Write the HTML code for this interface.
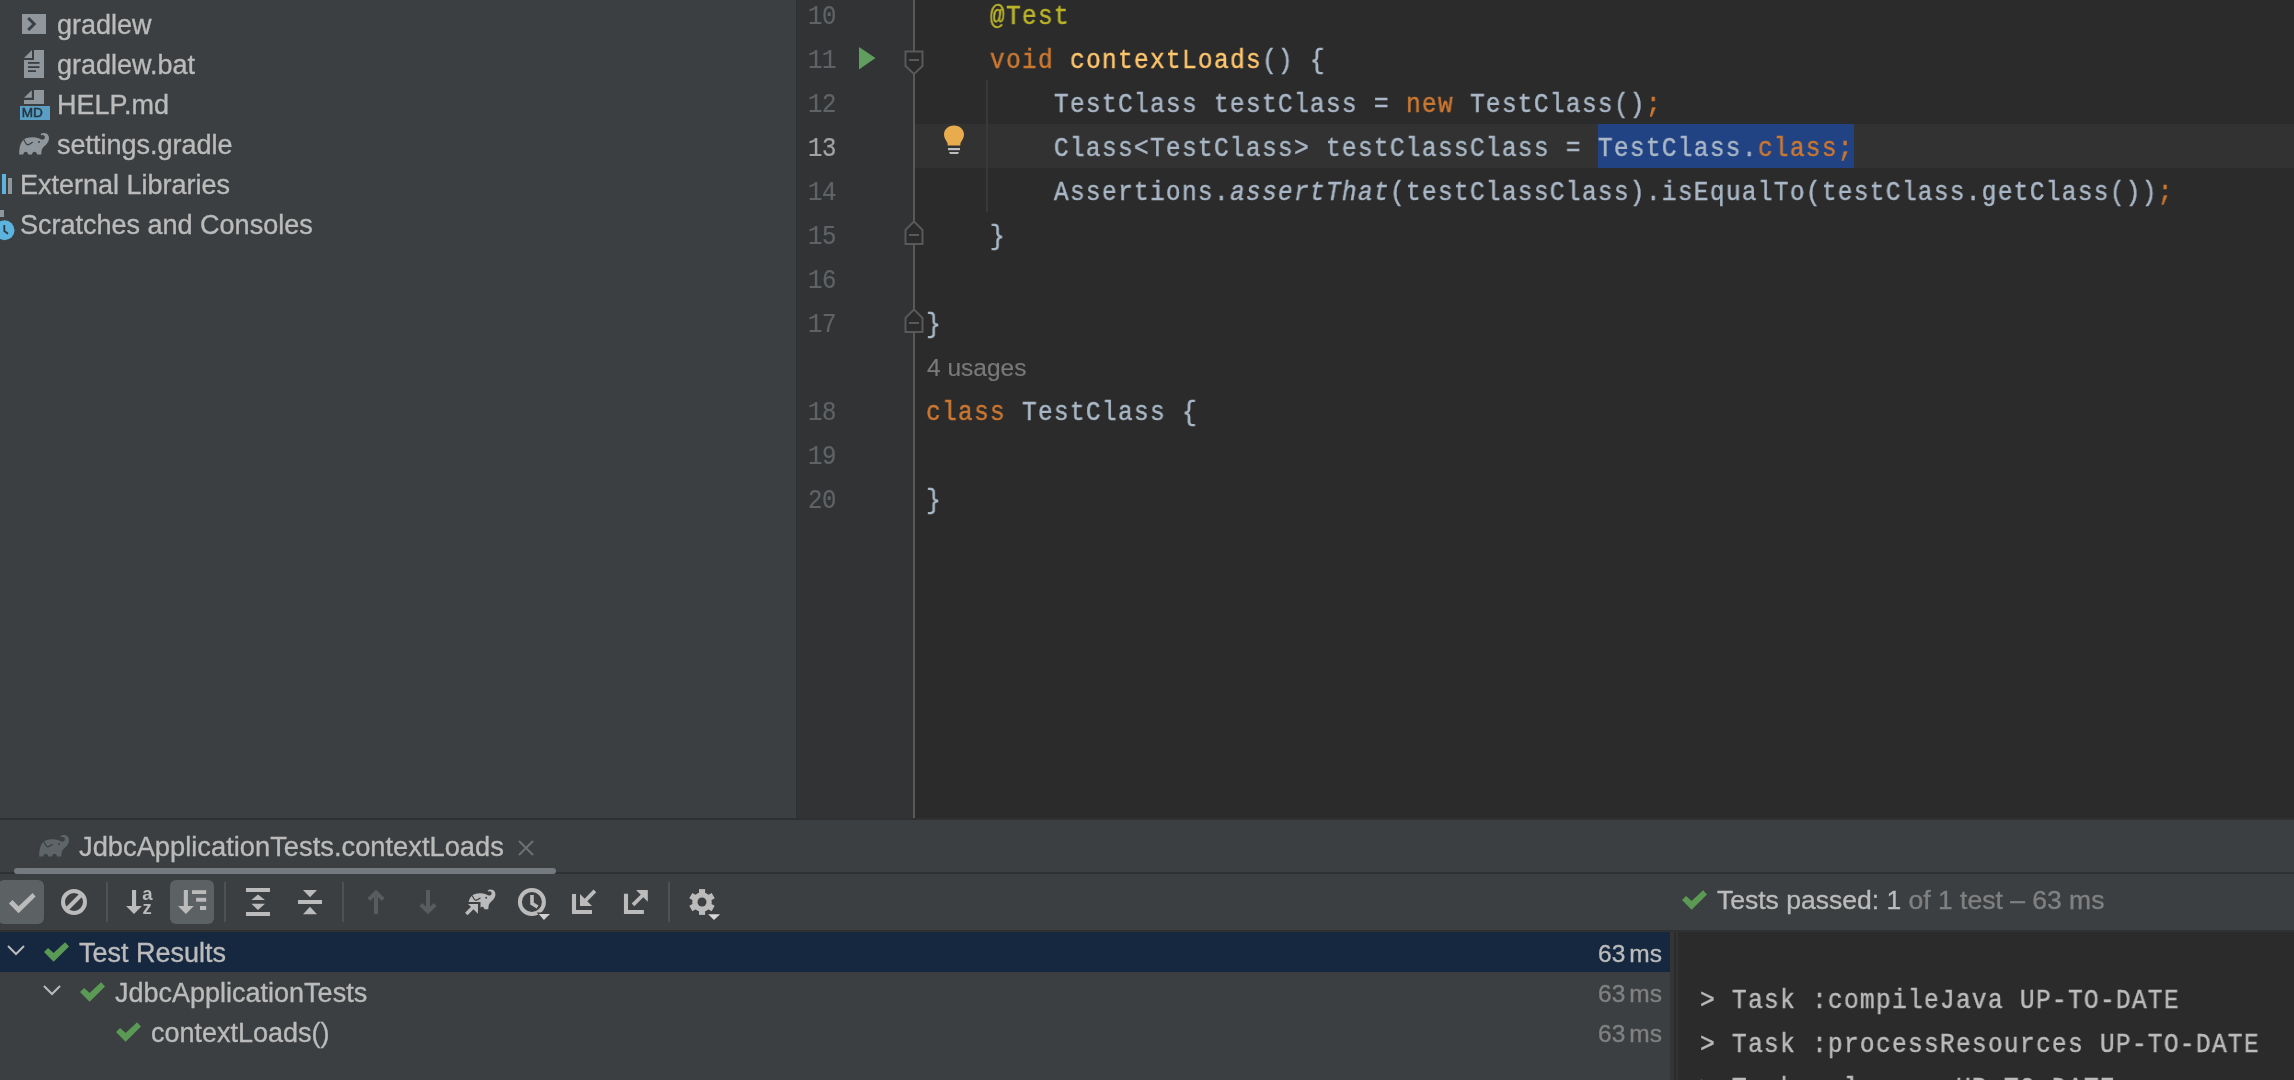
<!DOCTYPE html>
<html><head><meta charset="utf-8"><style>
html,body{margin:0;padding:0;}
body{width:2294px;height:1080px;overflow:hidden;position:relative;background:#3c3f41;font-family:"Liberation Sans",sans-serif;}
.r{position:absolute;}
.t{position:absolute;white-space:pre;will-change:transform;}
.s{position:absolute;overflow:visible;will-change:transform;}
</style></head><body>
<div class="r" style="left:0px;top:0px;width:796px;height:818px;background:#3c3f41;"></div>
<div class="t" style="left:57px;top:5.64px;font-family:'Liberation Sans', sans-serif;font-size:27px;line-height:38px;color:#bbbbbb;;-webkit-text-stroke:0.35px">gradlew</div>
<div class="t" style="left:57px;top:45.64px;font-family:'Liberation Sans', sans-serif;font-size:27px;line-height:38px;color:#bbbbbb;;-webkit-text-stroke:0.35px">gradlew.bat</div>
<div class="t" style="left:57px;top:85.64px;font-family:'Liberation Sans', sans-serif;font-size:27px;line-height:38px;color:#bbbbbb;;-webkit-text-stroke:0.35px">HELP.md</div>
<div class="t" style="left:57px;top:125.64px;font-family:'Liberation Sans', sans-serif;font-size:27px;line-height:38px;color:#bbbbbb;;-webkit-text-stroke:0.35px">settings.gradle</div>
<div class="t" style="left:20px;top:165.64px;font-family:'Liberation Sans', sans-serif;font-size:27px;line-height:38px;color:#bbbbbb;;-webkit-text-stroke:0.35px">External Libraries</div>
<div class="t" style="left:20px;top:205.64px;font-family:'Liberation Sans', sans-serif;font-size:27px;line-height:38px;color:#bbbbbb;;-webkit-text-stroke:0.35px">Scratches and Consoles</div>
<svg class="s" style="left:22px;top:14px" width="24" height="20" viewBox="0 0 24 20"><rect x="0" y="0" width="24" height="20" fill="#8f979d"/><path d="M6.2 4 L12.2 10 L6.2 16" stroke="#3c3f41" stroke-width="3" fill="none"/></svg>
<svg class="s" style="left:24px;top:50px" width="20" height="28" viewBox="0 0 20 28"><path d="M0 8 L8 0 L8 8 Z" fill="#8f979d"/><path d="M10 0 L20 0 L20 28 L0 28 L0 10 L10 10 Z" fill="#8f979d"/><rect x="4" y="12" width="11.5" height="1.8" fill="#3c3f41"/><rect x="4" y="16.2" width="11.5" height="1.8" fill="#3c3f41"/><rect x="4" y="20.2" width="8" height="1.8" fill="#3c3f41"/></svg>
<svg class="s" style="left:20px;top:90px" width="31" height="31" viewBox="0 0 31 31"><path d="M4 7.7 L11.8 0.3 L11.8 7.7 Z" fill="#8f979d"/><path d="M14 0 L24 0 L24 14 L4 14 L4 10 L14 10 Z" fill="#8f979d"/><rect x="0" y="16" width="30" height="14" fill="#5a9ec4"/><text x="1.8" y="27.4" font-family="Liberation Sans" font-size="13.6" stroke="#233744" stroke-width="0.5" fill="#233744">MD</text></svg>
<svg class="s" style="left:16px;top:130px" width="36" height="28" viewBox="0 0 36 28"><path d="M3.2,24.6 C3,16 5.5,10 10,8.3 C14,6.8 19,6.8 22.5,8.2 C24.5,9 25.8,9.8 27,9.6 C28.8,9.2 29.3,7.3 28.6,6 C27.9,4.8 26.2,4.7 25.2,5.4 L24.6,4.4 C25.8,2.9 28.5,2.5 30.5,3.6 C32.6,4.8 33.3,7.5 32.9,9.6 C32.4,12.5 30.5,14.5 28,16.5 C26.5,17.8 25.8,19.5 25.6,21 L25.2,24.6 L21,24.6 C20.9,22.8 19.8,21.8 18.5,21.8 C17.2,21.8 16.2,22.8 16,24.6 L12.2,24.6 C12,22.8 11,21.8 9.75,21.8 C8.5,21.8 7.5,22.8 7.3,24.6 Z" fill="#8f979d"/><path d="M7.8,9.6 C9,12 10,14.5 11.5,14.8 C13,15 15,13.5 16.8,12.2" stroke="#3c3f41" stroke-width="1.2" fill="none"/><circle cx="23" cy="12" r="1" fill="#3c3f41"/></svg>
<div class="r" style="left:2px;top:174px;width:4px;height:20px;background:#5cb3dd;"></div>
<div class="r" style="left:8px;top:178px;width:4px;height:16px;background:#8f979d;"></div>
<div class="r" style="left:0px;top:210px;width:4px;height:7px;background:#8f979d;"></div>
<svg class="s" style="left:-6.5px;top:220px" width="21" height="21" viewBox="0 0 21 21"><circle cx="10.5" cy="10.2" r="10" fill="#5cb3dd"/><path d="M10.3 5 L10.3 11 L14 13.8" stroke="#2b3a45" stroke-width="1.8" fill="none"/></svg>
<div class="r" style="left:796px;top:0px;width:117px;height:818px;background:#313335;"></div>
<div class="r" style="left:796px;top:0px;width:1px;height:818px;background:#2f3032;"></div>
<div class="r" style="left:915px;top:0px;width:1379px;height:818px;background:#2b2b2b;"></div>
<div class="r" style="left:915px;top:124px;width:1379px;height:44px;background:#323232;"></div>
<div class="r" style="left:913px;top:0px;width:2px;height:818px;background:#595959;"></div>
<div class="t" style="right:1457.6px;top:0.61px;font-family:'Liberation Mono', monospace;font-size:24px;line-height:34px;color:#606366;letter-spacing:-0.4px;-webkit-text-stroke:0.2px;transform:scale(1,1.13);transform-origin:100% 23.39px">10</div>
<div class="t" style="right:1457.6px;top:44.61px;font-family:'Liberation Mono', monospace;font-size:24px;line-height:34px;color:#606366;letter-spacing:-0.4px;-webkit-text-stroke:0.2px;transform:scale(1,1.13);transform-origin:100% 23.39px">11</div>
<div class="t" style="right:1457.6px;top:88.61px;font-family:'Liberation Mono', monospace;font-size:24px;line-height:34px;color:#606366;letter-spacing:-0.4px;-webkit-text-stroke:0.2px;transform:scale(1,1.13);transform-origin:100% 23.39px">12</div>
<div class="t" style="right:1457.6px;top:132.61px;font-family:'Liberation Mono', monospace;font-size:24px;line-height:34px;color:#a4a3a3;letter-spacing:-0.4px;-webkit-text-stroke:0.2px;transform:scale(1,1.13);transform-origin:100% 23.39px">13</div>
<div class="t" style="right:1457.6px;top:176.61px;font-family:'Liberation Mono', monospace;font-size:24px;line-height:34px;color:#606366;letter-spacing:-0.4px;-webkit-text-stroke:0.2px;transform:scale(1,1.13);transform-origin:100% 23.39px">14</div>
<div class="t" style="right:1457.6px;top:220.61px;font-family:'Liberation Mono', monospace;font-size:24px;line-height:34px;color:#606366;letter-spacing:-0.4px;-webkit-text-stroke:0.2px;transform:scale(1,1.13);transform-origin:100% 23.39px">15</div>
<div class="t" style="right:1457.6px;top:264.61px;font-family:'Liberation Mono', monospace;font-size:24px;line-height:34px;color:#606366;letter-spacing:-0.4px;-webkit-text-stroke:0.2px;transform:scale(1,1.13);transform-origin:100% 23.39px">16</div>
<div class="t" style="right:1457.6px;top:308.61px;font-family:'Liberation Mono', monospace;font-size:24px;line-height:34px;color:#606366;letter-spacing:-0.4px;-webkit-text-stroke:0.2px;transform:scale(1,1.13);transform-origin:100% 23.39px">17</div>
<div class="t" style="right:1457.6px;top:396.61px;font-family:'Liberation Mono', monospace;font-size:24px;line-height:34px;color:#606366;letter-spacing:-0.4px;-webkit-text-stroke:0.2px;transform:scale(1,1.13);transform-origin:100% 23.39px">18</div>
<div class="t" style="right:1457.6px;top:440.61px;font-family:'Liberation Mono', monospace;font-size:24px;line-height:34px;color:#606366;letter-spacing:-0.4px;-webkit-text-stroke:0.2px;transform:scale(1,1.13);transform-origin:100% 23.39px">19</div>
<div class="t" style="right:1457.6px;top:484.61px;font-family:'Liberation Mono', monospace;font-size:24px;line-height:34px;color:#606366;letter-spacing:-0.4px;-webkit-text-stroke:0.2px;transform:scale(1,1.13);transform-origin:100% 23.39px">20</div>
<svg class="s" style="left:859px;top:47px" width="17" height="23" viewBox="0 0 17 23"><path d="M0 0 L16.5 11 L0 22.5 Z" fill="#5f9e5f"/></svg>
<svg class="s" style="left:904px;top:50px" width="20" height="26" viewBox="0 0 20 26"><path d="M1.5 1.5 L18.5 1.5 L18.5 16 L10 24 L1.5 16 Z" fill="#2b2b2b" stroke="#595959" stroke-width="2"/><rect x="5" y="9" width="10" height="2" fill="#595959"/></svg>
<svg class="s" style="left:904px;top:220px" width="20" height="26" viewBox="0 0 20 26"><path d="M1.5 24 L18.5 24 L18.5 10 L10 1.5 L1.5 10 Z" fill="#2b2b2b" stroke="#595959" stroke-width="2"/><rect x="5" y="14" width="10" height="2" fill="#595959"/></svg>
<svg class="s" style="left:904px;top:308px" width="20" height="26" viewBox="0 0 20 26"><path d="M1.5 24 L18.5 24 L18.5 10 L10 1.5 L1.5 10 Z" fill="#2b2b2b" stroke="#595959" stroke-width="2"/><rect x="5" y="14" width="10" height="2" fill="#595959"/></svg>
<svg class="s" style="left:943px;top:125px" width="23" height="31" viewBox="0 0 23 31"><path d="M11 0.5 C17 0.5 21 4.5 21 9.5 C21 13 19 15 17.5 18 L17.3 20.5 L4.7 20.5 L4.5 18 C3 15 1 13 1 9.5 C1 4.5 5 0.5 11 0.5 Z" fill="#e8ac4e"/><rect x="5" y="23" width="12" height="2.2" fill="#bdbdbd"/><path d="M6 27 L16 27 L15 29 L7 29 Z" fill="#bdbdbd"/></svg>
<div class="r" style="left:986px;top:80px;width:2px;height:132px;background:#393939;"></div>
<div class="r" style="left:1598px;top:124px;width:256px;height:44px;background:#214283;"></div>
<div class="t" style="left:926px;top:-0.90px;font-family:'Liberation Mono', monospace;font-size:26.6667px;line-height:37px;color:#a9b7c6;white-space:pre;letter-spacing:1.391px;-webkit-text-stroke:0.45px;transform:scale(0.92,1.04);transform-origin:0 25.60px"><span style="color:#bbb529">    @Test</span></div>
<div class="t" style="left:926px;top:43.10px;font-family:'Liberation Mono', monospace;font-size:26.6667px;line-height:37px;color:#a9b7c6;white-space:pre;letter-spacing:1.391px;-webkit-text-stroke:0.45px;transform:scale(0.92,1.04);transform-origin:0 25.60px"><span style="color:#a9b7c6">    </span><span style="color:#cc7832">void</span><span style="color:#a9b7c6"> </span><span style="color:#ffc66d">contextLoads</span><span style="color:#a9b7c6">() {</span></div>
<div class="t" style="left:926px;top:87.10px;font-family:'Liberation Mono', monospace;font-size:26.6667px;line-height:37px;color:#a9b7c6;white-space:pre;letter-spacing:1.391px;-webkit-text-stroke:0.45px;transform:scale(0.92,1.04);transform-origin:0 25.60px"><span style="color:#a9b7c6">        TestClass testClass = </span><span style="color:#cc7832">new</span><span style="color:#a9b7c6"> TestClass()</span><span style="color:#cc7832">;</span></div>
<div class="t" style="left:926px;top:131.10px;font-family:'Liberation Mono', monospace;font-size:26.6667px;line-height:37px;color:#a9b7c6;white-space:pre;letter-spacing:1.391px;-webkit-text-stroke:0.45px;transform:scale(0.92,1.04);transform-origin:0 25.60px"><span style="color:#a9b7c6">        Class&lt;TestClass&gt; testClassClass = TestClass.</span><span style="color:#cc7832">class;</span></div>
<div class="t" style="left:926px;top:175.10px;font-family:'Liberation Mono', monospace;font-size:26.6667px;line-height:37px;color:#a9b7c6;white-space:pre;letter-spacing:1.391px;-webkit-text-stroke:0.45px;transform:scale(0.92,1.04);transform-origin:0 25.60px"><span style="color:#a9b7c6">        Assertions.</span><span style="color:#a9b7c6;font-style:italic">assertThat</span><span style="color:#a9b7c6">(testClassClass).isEqualTo(testClass.getClass())</span><span style="color:#cc7832">;</span></div>
<div class="t" style="left:926px;top:219.10px;font-family:'Liberation Mono', monospace;font-size:26.6667px;line-height:37px;color:#a9b7c6;white-space:pre;letter-spacing:1.391px;-webkit-text-stroke:0.45px;transform:scale(0.92,1.04);transform-origin:0 25.60px"><span style="color:#a9b7c6">    }</span></div>
<div class="t" style="left:926px;top:307.10px;font-family:'Liberation Mono', monospace;font-size:26.6667px;line-height:37px;color:#a9b7c6;white-space:pre;letter-spacing:1.391px;-webkit-text-stroke:0.45px;transform:scale(0.92,1.04);transform-origin:0 25.60px"><span style="color:#a9b7c6">}</span></div>
<div class="t" style="left:926px;top:395.10px;font-family:'Liberation Mono', monospace;font-size:26.6667px;line-height:37px;color:#a9b7c6;white-space:pre;letter-spacing:1.391px;-webkit-text-stroke:0.45px;transform:scale(0.92,1.04);transform-origin:0 25.60px"><span style="color:#cc7832">class</span><span style="color:#a9b7c6"> TestClass {</span></div>
<div class="t" style="left:926px;top:483.10px;font-family:'Liberation Mono', monospace;font-size:26.6667px;line-height:37px;color:#a9b7c6;white-space:pre;letter-spacing:1.391px;-webkit-text-stroke:0.45px;transform:scale(0.92,1.04);transform-origin:0 25.60px"><span style="color:#a9b7c6">}</span></div>
<div class="t" style="left:927px;top:350.51px;font-family:'Liberation Sans', sans-serif;font-size:24.5px;line-height:34px;color:#7a7a7a;-webkit-text-stroke:0.15px">4 usages</div>
<div class="r" style="left:0px;top:818px;width:2294px;height:2px;background:#2f3032;"></div>
<div class="r" style="left:0px;top:820px;width:2294px;height:52px;background:#3c3f41;"></div>
<div class="r" style="left:0px;top:872px;width:2294px;height:2px;background:#2f3032;"></div>
<div class="r" style="left:14px;top:868px;width:542px;height:6px;background:#747a80;border-radius:3px"></div>
<svg class="s" style="left:35.7px;top:831.5px" width="36" height="28" viewBox="0 0 36 28"><path d="M3.2,24.6 C3,16 5.5,10 10,8.3 C14,6.8 19,6.8 22.5,8.2 C24.5,9 25.8,9.8 27,9.6 C28.8,9.2 29.3,7.3 28.6,6 C27.9,4.8 26.2,4.7 25.2,5.4 L24.6,4.4 C25.8,2.9 28.5,2.5 30.5,3.6 C32.6,4.8 33.3,7.5 32.9,9.6 C32.4,12.5 30.5,14.5 28,16.5 C26.5,17.8 25.8,19.5 25.6,21 L25.2,24.6 L21,24.6 C20.9,22.8 19.8,21.8 18.5,21.8 C17.2,21.8 16.2,22.8 16,24.6 L12.2,24.6 C12,22.8 11,21.8 9.75,21.8 C8.5,21.8 7.5,22.8 7.3,24.6 Z" fill="#5e6569"/><path d="M7.8,9.6 C9,12 10,14.5 11.5,14.8 C13,15 15,13.5 16.8,12.2" stroke="#3c3f41" stroke-width="1.2" fill="none"/><circle cx="23" cy="12" r="1" fill="#3c3f41"/></svg>
<div class="t" style="left:79px;top:827.54px;font-family:'Liberation Sans', sans-serif;font-size:27.3px;line-height:38px;color:#bbbbbb;;-webkit-text-stroke:0.35px">JdbcApplicationTests.contextLoads</div>
<svg class="s" style="left:518px;top:840px" width="16" height="16" viewBox="0 0 16 16"><path d="M1 1 L15 15 M15 1 L1 15" stroke="#6e7275" stroke-width="1.8"/></svg>
<div class="r" style="left:0px;top:874px;width:2294px;height:56px;background:#3c3f41;"></div>
<div class="r" style="left:0px;top:930px;width:2294px;height:2px;background:#2f3032;"></div>
<div class="r" style="left:-2px;top:880px;width:46px;height:44px;background:#5c6164;border-radius:6px"></div>
<div class="r" style="left:170px;top:880px;width:44px;height:44px;background:#5c6164;border-radius:6px"></div>
<svg class="s" style="left:0px;top:880px" width="44" height="44" viewBox="0 0 44 44"><polygon points="12.5,20 8.9,23.5 18.6,33.2 35.6,16.4 32.6,12.9 18.6,26.2" fill="#bbbbbb"/></svg>
<svg class="s" style="left:58px;top:886px" width="32" height="32" viewBox="0 0 32 32"><circle cx="16" cy="16" r="11" stroke="#bbbbbb" stroke-width="4" fill="none"/><path d="M8.5 23.5 L23.5 8.5" stroke="#bbbbbb" stroke-width="4"/></svg>
<div class="r" style="left:106px;top:882px;width:2px;height:40px;background:#4f5254;"></div>
<div class="r" style="left:224px;top:882px;width:2px;height:40px;background:#4f5254;"></div>
<div class="r" style="left:342px;top:882px;width:2px;height:40px;background:#4f5254;"></div>
<div class="r" style="left:668px;top:882px;width:2px;height:40px;background:#4f5254;"></div>
<svg class="s" style="left:120px;top:882px" width="40" height="40" viewBox="0 0 40 40"><rect x="12" y="8" width="4.1" height="17" fill="#bbbbbb"/><path d="M6.1 24.1 L21.9 24.1 L14 32 Z" fill="#bbbbbb"/><text x="22.3" y="18.1" font-family="Liberation Sans" font-weight="bold" font-size="18.5" fill="#bbbbbb">a</text><text x="22.6" y="32" font-family="Liberation Sans" font-weight="bold" font-size="18.5" fill="#bbbbbb">z</text></svg>
<svg class="s" style="left:170px;top:880px" width="44" height="44" viewBox="0 0 44 44"><rect x="13.8" y="10" width="4.1" height="17" fill="#bbbbbb"/><path d="M8 26 L23.8 26 L15.9 34 Z" fill="#bbbbbb"/><rect x="22" y="10.2" width="14.2" height="3.8" fill="#bbbbbb"/><rect x="26.1" y="17.8" width="10.1" height="3.9" fill="#bbbbbb"/><rect x="30" y="26" width="6.2" height="4" fill="#bbbbbb"/></svg>
<svg class="s" style="left:246px;top:888px" width="24" height="28" viewBox="0 0 24 28"><rect x="0" y="0" width="24" height="4" fill="#bbbbbb"/><rect x="0" y="24" width="24" height="4" fill="#bbbbbb"/><path d="M5.4 12 L12 6.4 L19 12 Z M5.4 15.8 L12 22 L19 15.8 Z" fill="#bbbbbb"/></svg>
<svg class="s" style="left:298px;top:888px" width="24" height="28" viewBox="0 0 24 28"><rect x="0" y="12" width="24" height="4" fill="#bbbbbb"/><path d="M5 2 L19 2 L12 9.2 Z M5 26.2 L19 26.2 L12 18.8 Z" fill="#bbbbbb"/></svg>
<svg class="s" style="left:360px;top:882px" width="40" height="40" viewBox="0 0 40 40"><rect x="14" y="12" width="4" height="20" fill="#5a5b5c"/><path d="M8.8 17.5 L16 10.6 L23.2 17.5" stroke="#5a5b5c" stroke-width="4" fill="none" stroke-linecap="butt" stroke-linejoin="miter"/></svg>
<svg class="s" style="left:412px;top:882px" width="40" height="40" viewBox="0 0 40 40"><rect x="14" y="8" width="4" height="20" fill="#5a5b5c"/><path d="M8.8 22.5 L16 29.4 L23.2 22.5" stroke="#5a5b5c" stroke-width="4" fill="none" stroke-linecap="butt" stroke-linejoin="miter"/></svg>
<svg class="s" style="left:459px;top:884px" width="40" height="36" viewBox="0 0 40 36"><g transform="translate(6.06,2.7) scale(0.92)"><path d="M3.2,24.6 C3,16 5.5,10 10,8.3 C14,6.8 19,6.8 22.5,8.2 C24.5,9 25.8,9.8 27,9.6 C28.8,9.2 29.3,7.3 28.6,6 C27.9,4.8 26.2,4.7 25.2,5.4 L24.6,4.4 C25.8,2.9 28.5,2.5 30.5,3.6 C32.6,4.8 33.3,7.5 32.9,9.6 C32.4,12.5 30.5,14.5 28,16.5 C26.5,17.8 25.8,19.5 25.6,21 L25.2,24.6 L21,24.6 C20.9,22.8 19.8,21.8 18.5,21.8 C17.2,21.8 16.2,22.8 16,24.6 L12.2,24.6 C12,22.8 11,21.8 9.75,21.8 C8.5,21.8 7.5,22.8 7.3,24.6 Z" fill="#bbbbbb"/><path d="M7.8,9.6 C9,12 10,14.5 11.5,14.8 C13,15 15,13.5 16.8,12.2" stroke="#3c3f41" stroke-width="1.2" fill="none"/><circle cx="23" cy="12" r="1" fill="#3c3f41"/></g><rect x="0" y="18" width="21.5" height="18" fill="#3c3f41"/><path d="M7.3 30 L15 22.3" stroke="#bbbbbb" stroke-width="3.4"/><path d="M9 20 L19 20 L19 29.7 Z" fill="#bbbbbb"/></svg>
<svg class="s" style="left:512px;top:884px" width="44" height="40" viewBox="0 0 44 40"><circle cx="19.9" cy="18" r="12" stroke="#bbbbbb" stroke-width="4" fill="none"/><path d="M20 11.1 L20 19.6 L25.6 23" stroke="#bbbbbb" stroke-width="3.6" fill="none"/><path d="M24.7 28.5 L40 28.5 L31.9 37.5 Z" fill="#3c3f41"/><path d="M26.7 30 L38 30 L31.9 35.9 Z" fill="#d0d0d0"/></svg>
<svg class="s" style="left:560px;top:882px" width="40" height="40" viewBox="0 0 40 40"><path d="M14 12 L14 30 L32 30" stroke="#bbbbbb" stroke-width="4.1" fill="none" stroke-linejoin="miter"/><path d="M20 12 L20 24 L32 24 Z" fill="#bbbbbb"/><path d="M24 20 L34.9 8.9" stroke="#bbbbbb" stroke-width="3.8"/></svg>
<svg class="s" style="left:612px;top:882px" width="40" height="40" viewBox="0 0 40 40"><path d="M14 11.8 L14 30 L31.9 30" stroke="#bbbbbb" stroke-width="4.1" fill="none" stroke-linejoin="miter"/><path d="M24.1 8.1 L35.8 8.1 L35.8 19.8 Z" fill="#bbbbbb"/><path d="M21 22.9 L31 13" stroke="#bbbbbb" stroke-width="3.8"/></svg>
<svg class="s" style="left:682px;top:882px" width="44" height="44" viewBox="0 0 44 44"><circle cx="20" cy="20" r="9.8" fill="#bbbbbb"/><g fill="#bbbbbb"><rect x="17" y="7.1" width="6.1" height="25.8"/><rect x="17" y="7.1" width="6.1" height="25.8" transform="rotate(60 20 20)"/><rect x="17" y="7.1" width="6.1" height="25.8" transform="rotate(120 20 20)"/></g><circle cx="20" cy="20" r="4.5" fill="#3c3f41"/><path d="M24.1 30.7 L40.2 30.7 L32 39.5 Z" fill="#3c3f41"/><path d="M26.1 32.2 L38.1 32.2 L32 37.9 Z" fill="#d8d8d8"/></svg>
<svg class="s" style="left:1682px;top:890px" width="26" height="21" viewBox="0 0 26 21"><polygon points="4.06,5.94 0.03,10.1 9.6,19.8 25,4.4 21.1,0.25 9.6,10.9" fill="#5b9a55"/></svg>
<div class="t" style="left:1717px;top:882.31px;font-family:'Liberation Sans', sans-serif;font-size:26.5px;line-height:37px;color:#bbbbbb;;-webkit-text-stroke:0.35px">Tests passed: 1 <span style="color:#808080">of 1 test – 63 ms</span></div>
<div class="r" style="left:0px;top:932px;width:1670px;height:148px;background:#3c3f41;"></div>
<div class="r" style="left:0px;top:932px;width:1670px;height:40px;background:#162840;"></div>
<svg class="s" style="left:6px;top:944px" width="20" height="14" viewBox="0 0 20 14"><path d="M2 2 L10 10 L18 2" stroke="#bbbbbb" stroke-width="2" fill="none"/></svg>
<svg class="s" style="left:44px;top:942px" width="26" height="21" viewBox="0 0 26 21"><polygon points="4.06,5.94 0.03,10.1 9.6,19.8 25,4.4 21.1,0.25 9.6,10.9" fill="#5b9a55"/></svg>
<div class="t" style="left:79px;top:933.64px;font-family:'Liberation Sans', sans-serif;font-size:27px;line-height:38px;color:#bbbbbb;;-webkit-text-stroke:0.35px">Test Results</div>
<svg class="s" style="left:42px;top:984px" width="20" height="14" viewBox="0 0 20 14"><path d="M2 2 L10 10 L18 2" stroke="#bbbbbb" stroke-width="2" fill="none"/></svg>
<svg class="s" style="left:80px;top:982px" width="26" height="21" viewBox="0 0 26 21"><polygon points="4.06,5.94 0.03,10.1 9.6,19.8 25,4.4 21.1,0.25 9.6,10.9" fill="#5b9a55"/></svg>
<div class="t" style="left:115px;top:973.64px;font-family:'Liberation Sans', sans-serif;font-size:27px;line-height:38px;color:#bbbbbb;;-webkit-text-stroke:0.35px">JdbcApplicationTests</div>
<svg class="s" style="left:116px;top:1022px" width="26" height="21" viewBox="0 0 26 21"><polygon points="4.06,5.94 0.03,10.1 9.6,19.8 25,4.4 21.1,0.25 9.6,10.9" fill="#5b9a55"/></svg>
<div class="t" style="left:151px;top:1013.64px;font-family:'Liberation Sans', sans-serif;font-size:27px;line-height:38px;color:#bbbbbb;;-webkit-text-stroke:0.35px">contextLoads()</div>
<div class="t" style="right:632px;top:936.51px;font-family:'Liberation Sans', sans-serif;font-size:24.5px;line-height:34px;color:#bbbbbb;;-webkit-text-stroke:0.35px">63<span style="display:inline-block;width:4px"></span>ms</div>
<div class="t" style="right:632px;top:976.51px;font-family:'Liberation Sans', sans-serif;font-size:24.5px;line-height:34px;color:#808080;;-webkit-text-stroke:0.35px">63<span style="display:inline-block;width:4px"></span>ms</div>
<div class="t" style="right:632px;top:1016.51px;font-family:'Liberation Sans', sans-serif;font-size:24.5px;line-height:34px;color:#808080;;-webkit-text-stroke:0.35px">63<span style="display:inline-block;width:4px"></span>ms</div>
<div class="r" style="left:1670px;top:932px;width:4px;height:148px;background:#333537;"></div>
<div class="r" style="left:1674px;top:932px;width:2px;height:148px;background:#2a2b2c;"></div>
<div class="r" style="left:1676px;top:932px;width:2px;height:148px;background:#333333;"></div>
<div class="r" style="left:1678px;top:932px;width:616px;height:148px;background:#2b2b2b;"></div>
<div class="t" style="left:1700px;top:983.10px;font-family:'Liberation Mono', monospace;font-size:26.6667px;line-height:37px;color:#bbbbbb;white-space:pre;letter-spacing:1.391px;-webkit-text-stroke:0.45px;transform:scale(0.92,1.04);transform-origin:0 25.60px">> Task :compileJava UP-TO-DATE</div>
<div class="t" style="left:1700px;top:1027.10px;font-family:'Liberation Mono', monospace;font-size:26.6667px;line-height:37px;color:#bbbbbb;white-space:pre;letter-spacing:1.391px;-webkit-text-stroke:0.45px;transform:scale(0.92,1.04);transform-origin:0 25.60px">> Task :processResources UP-TO-DATE</div>
<div class="t" style="left:1700px;top:1071.10px;font-family:'Liberation Mono', monospace;font-size:26.6667px;line-height:37px;color:#bbbbbb;white-space:pre;letter-spacing:1.391px;-webkit-text-stroke:0.45px;transform:scale(0.92,1.04);transform-origin:0 25.60px">> Task :classes UP-TO-DATE</div>
</body></html>
